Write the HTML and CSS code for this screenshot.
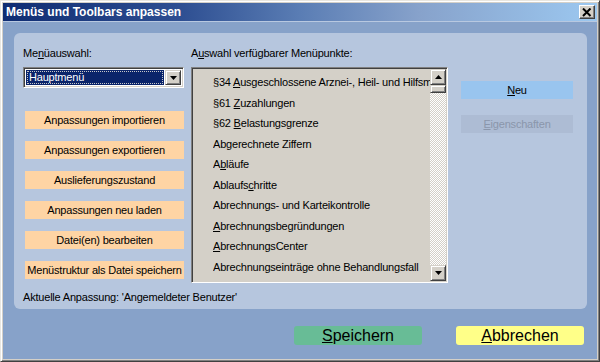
FILE: index.html
```html
<!DOCTYPE html>
<html lang="de">
<head>
<meta charset="utf-8">
<title>Menüs und Toolbars anpassen</title>
<link rel="stylesheet" href="styles.css">
</head>
<body>
<div class="window">
  <div class="titlebar">
    <span class="title">Menüs und Toolbars anpassen</span>
    <span class="close"><svg width="10" height="9" viewBox="0 0 10 9"><path d="M1 0.5 L8.5 8 M8.5 0.5 L1 8" stroke="#000" stroke-width="2"/></svg></span>
  </div>
  <div class="body">
    <div class="panel">
      <div class="cols">
        <div class="col-left">
          <div class="label">Me<u>n</u>üauswahl:</div>
          <div class="select">
            <div class="select-value"><span class="focus">Hauptmenü</span></div>
            <div class="select-btn"><svg width="7" height="4" viewBox="0 0 7 4"><path d="M0 0 H7 L3.5 4 Z" fill="#000"/></svg></div>
          </div>
          <div class="btns">
            <div class="obtn">Anpassungen importieren</div>
            <div class="obtn">Anpassungen exportieren</div>
            <div class="obtn">Auslieferungszustand</div>
            <div class="obtn">Anpassungen neu laden</div>
            <div class="obtn">Datei(en) bearbeiten</div>
            <div class="obtn">Menüstruktur als Datei speichern</div>
          </div>
        </div>
        <div class="col-mid">
          <div class="label">A<u>u</u>swahl verfügbarer Menüpunkte:</div>
          <div class="list">
            <div class="items">
              <div class="item">§34 <u>A</u>usgeschlossene Arznei-, Heil- und Hilfsm</div>
              <div class="item">§61 <u>Z</u>uzahlungen</div>
              <div class="item">§62 <u>B</u>elastungsgrenze</div>
              <div class="item">Abgerechnete Ziffern</div>
              <div class="item">A<u>b</u>läufe</div>
              <div class="item">Ablaufs<u>c</u>hritte</div>
              <div class="item">Abrechnungs- und Karteikontrolle</div>
              <div class="item"><u>A</u>brechnungsbegründungen</div>
              <div class="item"><u>A</u>brechnungsCenter</div>
              <div class="item">Abrechnungseinträge ohne Behandlungsfall</div>
            </div>
            <div class="scrollbar">
              <div class="sbtn"><svg width="7" height="4" viewBox="0 0 7 4"><path d="M0 4 H7 L3.5 0 Z" fill="#000"/></svg></div>
              <div class="thumb"></div>
              <div class="track"></div>
              <div class="sbtn"><svg width="7" height="4" viewBox="0 0 7 4"><path d="M0 0 H7 L3.5 4 Z" fill="#000"/></svg></div>
            </div>
          </div>
        </div>
        <div class="col-right">
          <div class="rbtn neu"><u>N</u>eu</div>
          <div class="rbtn disabled"><u>E</u>igenschaften</div>
        </div>
      </div>
      <div class="status">Aktuelle Anpassung: 'Angemeldeter Benutzer'</div>
    </div>
    <div class="footer">
      <div class="fbtn save"><u>S</u>peichern</div>
      <div class="fbtn cancel"><u>A</u>bbrechen</div>
    </div>
  </div>
</div>
</body>
</html>
```

FILE: styles.css
```css
* { box-sizing: border-box; }
html, body { margin: 0; padding: 0; }
body {
  width: 600px;
  height: 362px;
  overflow: hidden;
  font-family: "Liberation Sans", Arial, sans-serif;
  font-size: 11px;
  letter-spacing: -0.2px;
  color: #000;
  background: #d4d0c8;
}
u { text-decoration: underline; text-underline-offset: 1px; }
.window {
  width: 600px;
  height: 362px;
  display: flex;
  flex-direction: column;
  padding: 3px 3px 3px 3px;
  background: #d4d0c8;
  border-top: 1px solid #e8e6e0;
  border-left: 1px solid #e8e6e0;
  border-right: 1px solid #404040;
  border-bottom: 1px solid #404040;
  box-shadow: inset 1px 1px 0 #fff, inset -1px -1px 0 #808080;
}
.titlebar {
  height: 18px;
  margin: -1px -1px 0 -1px;
  display: flex;
  align-items: center;
  justify-content: space-between;
  padding: 0 2px 0 3px;
  background: linear-gradient(to right, #0f2c72 0%, #2e4f92 30%, #5a7db4 50%, #87a2cb 70%, #9cc8f0 100%);
}
.title {
  color: #fff;
  font-weight: bold;
  font-size: 12px;
  letter-spacing: 0;
}
.close {
  width: 16px;
  height: 14px;
  display: flex;
  align-items: center;
  justify-content: center;
  background: #d4d0c8;
  border-top: 1px solid #fff;
  border-left: 1px solid #fff;
  border-right: 1px solid #404040;
  border-bottom: 1px solid #404040;
  box-shadow: inset -1px -1px 0 #808080;
}
.body {
  flex: 1;
  background: #87a2c9;
  border-top: 1px solid #b8c8e0;
  margin: 0 -1px -1px -1px;
  padding: 11px 10px 0 11px;
  display: flex;
  flex-direction: column;
}
.panel {
  height: 276px;
  background: #b6c6de;
  border-radius: 6px;
  padding: 13px 14px 0 9px;
  display: flex;
  flex-direction: column;
}
.cols {
  display: flex;
  align-items: flex-start;
}
.label {
  height: 14px;
  line-height: 14px;
  margin-bottom: 7px;
}
.col-left { width: 161px; }
.select {
  height: 21px;
  display: flex;
  padding: 2px;
  background: #fff;
  border-top: 1px solid #808080;
  border-left: 1px solid #808080;
  border-right: 1px solid #fff;
  border-bottom: 1px solid #fff;
  box-shadow: inset 1px 1px 0 #404040, inset -1px -1px 0 #d4d0c8;
}
.select-value {
  flex: 1;
  margin: 0 1px 0 0;
  padding: 1px;
  background: #0a246a;
  color: #fff;
  display: flex;
}
.focus {
  flex: 1;
  outline: 1px dotted #c8c8c8;
  outline-offset: -1px;
  line-height: 13px;
  padding-left: 2px;
}
.select-btn {
  width: 16px;
  display: flex;
  align-items: center;
  justify-content: center;
  background: #d4d0c8;
  border-top: 1px solid #d4d0c8;
  border-left: 1px solid #d4d0c8;
  border-right: 1px solid #404040;
  border-bottom: 1px solid #404040;
  box-shadow: inset 1px 1px 0 #fff, inset -1px -1px 0 #808080;
}
.btns {
  margin-top: 23px;
  padding-left: 2px;
  display: flex;
  flex-direction: column;
  gap: 12px;
}
.obtn {
  height: 18px;
  line-height: 18px;
  text-align: center;
  background: #fed4a4;
  white-space: nowrap;
}
.col-mid {
  width: 257px;
  margin-left: 7px;
}
.list {
  height: 216px;
  display: flex;
  background: #d4d0c8;
  border-top: 1px solid #808080;
  border-left: 1px solid #808080;
  border-right: 1px solid #fff;
  border-bottom: 1px solid #fff;
  box-shadow: inset 1px 1px 0 #404040, inset -1px -1px 0 #d4d0c8;
  padding: 1px;
}
.items {
  flex: 1;
  min-width: 0;
  overflow: hidden;
  padding: 3px 0 0 20px;
}
.item {
  height: 20.55px;
  line-height: 20.55px;
  white-space: nowrap;
  overflow: hidden;
}
.scrollbar {
  width: 16px;
  display: flex;
  flex-direction: column;
}
.sbtn {
  height: 16px;
  display: flex;
  align-items: center;
  justify-content: center;
  background: #d4d0c8;
  border-top: 1px solid #d4d0c8;
  border-left: 1px solid #d4d0c8;
  border-right: 1px solid #404040;
  border-bottom: 1px solid #404040;
  box-shadow: inset 1px 1px 0 #fff, inset -1px -1px 0 #808080;
}
.thumb {
  height: 8px;
  background: #d4d0c8;
  border-top: 1px solid #d4d0c8;
  border-left: 1px solid #d4d0c8;
  border-right: 1px solid #404040;
  border-bottom: 1px solid #404040;
  box-shadow: inset 1px 1px 0 #fff, inset -1px -1px 0 #808080;
}
.track {
  flex: 1;
  background: repeating-conic-gradient(#ffffff 0 25%, #d4d0c8 0 50%) 0 0 / 2px 2px;
}
.col-right {
  width: 112px;
  margin-left: 13px;
  padding-top: 35px;
  display: flex;
  flex-direction: column;
  gap: 16px;
}
.rbtn {
  height: 18px;
  line-height: 18px;
  text-align: center;
}
.neu { background: #99c5ef; }
.disabled { background: #adbcd4; color: #8a96ab; }
.status {
  margin-top: 7px;
  height: 14px;
  line-height: 14px;
}
.footer {
  display: flex;
  justify-content: flex-end;
  gap: 34px;
  margin-top: 17px;
  padding-right: 3px;
}
.fbtn {
  width: 128px;
  height: 19px;
  line-height: 19px;
  text-align: center;
  font-size: 16px;
  letter-spacing: 0;
  border-radius: 3px;
}
.save { background: #68bc96; }
.cancel { background: #ffff88; }
```
